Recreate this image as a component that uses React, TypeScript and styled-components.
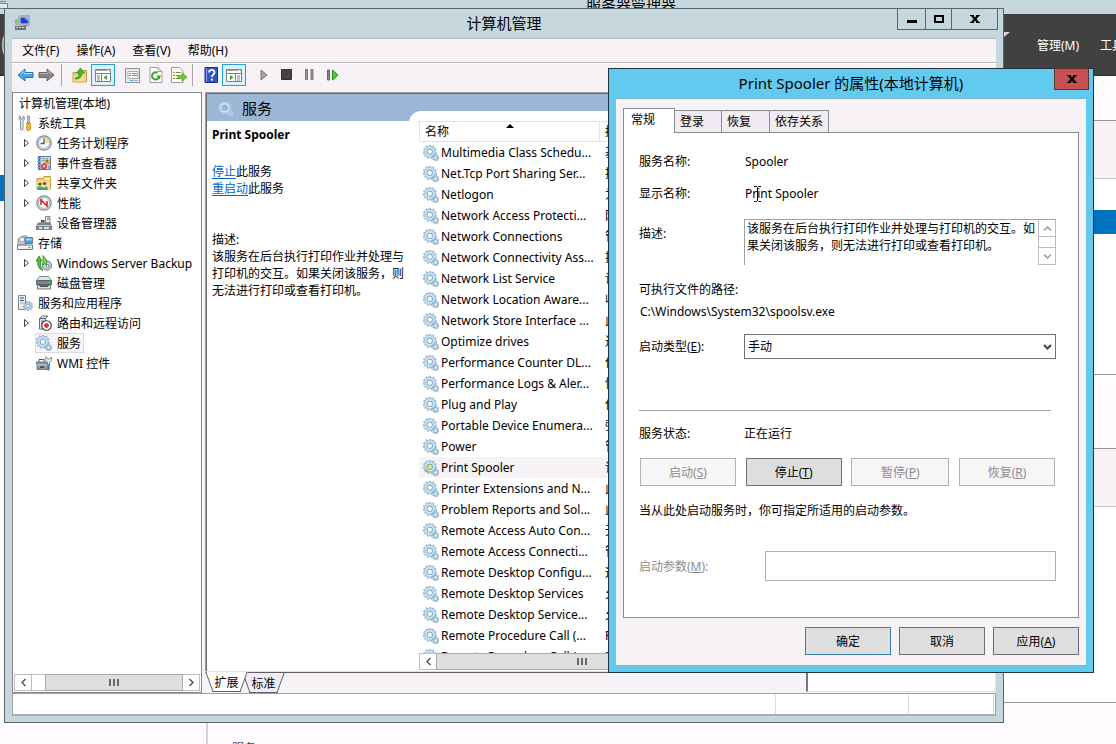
import React from "react";
import styled, { createGlobalStyle, css } from "styled-components";

const FONT = '"Noto Sans", "Noto Sans CJK SC", sans-serif';

const GlobalStyle = createGlobalStyle`
  *, *::before, *::after { box-sizing: border-box; }
  body { margin: 0; font: 12px/17px ${FONT}; color: #000; overflow: hidden; }
  button, input, select, textarea { font: inherit; color: inherit; margin: 0; border-radius: 0; }
  button { padding: 0; border: 0; background: none; }
  svg { display: block; flex: none; }
`;

const Desktop = styled.div`
  position: relative;
  display: flex;
  flex-direction: column;
  height: 100vh;
  overflow: hidden;
  background: #fffbff;
`;

/* ---------- Server manager, behind ---------- */

const BackTitle = styled.header`
  display: flex;
  justify-content: center;
  height: 14px;
  padding-left: 146px;
  background: #c5d6dc;
  font-size: 15px;
  line-height: 10px;
  flex: none;
`;

const BackTitleIcon = styled.div`
  position: absolute;
  left: 0;
  top: 0;
`;

const BackNav = styled.nav`
  display: flex;
  align-items: center;
  justify-content: flex-end;
  gap: 21px;
  height: 62px;
  padding-top: 2px;
  flex: none;
  background: #414141;
  border-bottom: 1px solid #2c2c2c;
  color: #fff;
  overflow: hidden;
  button { flex: none; white-space: nowrap; }
  button:last-child { width: 16px; overflow: hidden; }
`;

const BackCorner = styled.div`
  position: absolute;
  left: 0;
  right: 106px;
  top: 32px;
  display: flex;
  justify-content: space-between;
`;

const BackBody = styled.div`
  display: flex;
  flex: 1;
  min-height: 0;
`;

const BackSide = styled.aside`
  width: 208px;
  flex: none;
  padding-top: 99px;
  border-right: 2px solid #d4d2d6;
`;

const BackSideItem = styled.div`
  height: 26px;
  background: #0072c0;
`;

const BackTiles = styled.main`
  flex: 1;
  min-width: 0;
`;

const Tile = styled.div<{ $h: number; $bg: string; $line?: string }>`
  height: ${(p) => p.$h}px;
  background: ${(p) => p.$bg};
  border-bottom: ${(p) => (p.$line ? `1px solid ${p.$line}` : "0")};
`;

const TileCaption = styled.div`
  padding: 37px 0 0 24px;
  color: #444;
`;

/* ---------- Computer management window ---------- */

const Window = styled.section`
  position: absolute;
  inset: 8px 112px 21px 4px;
  display: flex;
  flex-direction: column;
  padding: 0 7px 6px;
  border: 1px solid #5b6468;
  background: #c5d6dc;
`;

const TitleBar = styled.header`
  position: relative;
  display: flex;
  align-items: center;
  justify-content: center;
  height: 29px;
  flex: none;
  font-size: 15px;
`;

const TitleIcon = styled.div`
  position: absolute;
  left: 2px;
  top: 6px;
`;

const WindowButtons = styled.div`
  position: absolute;
  right: -2px;
  top: -1px;
  display: flex;
  border: 1px solid #5b6468;
`;

const WindowButton = styled.button<{ $w: number }>`
  display: flex;
  align-items: center;
  justify-content: center;
  width: ${(p) => p.$w}px;
  height: 20px;
  & + & { border-left: 1px solid #5b6468; }
`;

const Client = styled.div`
  display: flex;
  flex-direction: column;
  flex: 1;
  min-height: 0;
  border-top: 1px solid #a9b8c4;
  background: #f6f2f6;
`;

const MenuBar = styled.nav`
  display: flex;
  align-items: center;
  gap: 17px;
  height: 24px;
  padding-left: 10px;
  flex: none;
  border-bottom: 1px solid #b9b9bb;
`;

const ToolBar = styled.div`
  display: flex;
  align-items: center;
  height: 29px;
  padding: 0 0 7px 4px;
  flex: none;
  border-top: 1px solid #fff;
`;

const ToolButton = styled.button<{ $on?: boolean; $w?: number }>`
  display: flex;
  align-items: center;
  justify-content: center;
  width: ${(p) => p.$w ?? 23}px;
  height: 22px;
  ${(p) =>
    p.$on &&
    css`
      width: 24px;
      border: 1px solid #26a0da;
      background: #dff2fb;
    `}
`;

const ToolSeparator = styled.div`
  width: 1px;
  height: 22px;
  margin: 0 6px 0 2px;
  background: #a5a5a8;
`;

const ToolGap = styled.div`
  width: 6px;
`;

const Panes = styled.div`
  display: flex;
  flex: 1;
  min-height: 0;
`;

const TreePane = styled.div`
  display: flex;
  flex-direction: column;
  width: 190px;
  margin-right: 3px;
  padding: 0 1px 1px;
  flex: none;
  border: 1px solid #848694;
  background: #fff;
`;

const Tree = styled.ul`
  flex: 1;
  min-height: 0;
  margin: 0;
  padding: 0;
  list-style: none;
  overflow: hidden;
`;

const TreeRow = styled.li<{ $level: number }>`
  display: flex;
  align-items: center;
  height: 20px;
  padding-left: ${(p) => [5, 3, 9][p.$level]}px;
  white-space: nowrap;
`;

const TreeTwist = styled.span`
  display: flex;
  width: 13px;
`;

const TreeItem = styled.span<{ $selected?: boolean }>`
  display: flex;
  align-items: center;
  gap: 5px;
  height: 20px;
  padding: 0 3px 0 0;
  ${(p) =>
    p.$selected &&
    css`
      background: #f8f5f8;
      box-shadow: -1px 0 0 #dedade, inset 0 1px 0 #dedade, inset 0 -1px 0 #dedade, inset -1px 0 0 #dedade;
    `}
`;

const ScrollBar = styled.div`
  display: flex;
  height: 17px;
  flex: none;
  background: #fff;
  border: 1px solid #bdbdbf;
`;

const ScrollArrow = styled.button`
  display: flex;
  align-items: center;
  justify-content: center;
  width: 16px;
  flex: none;
  background: #fff;
`;

const ScrollTrack = styled.div<{ $before: number; $after: number }>`
  display: flex;
  flex: 1;
  padding: 0 ${(p) => p.$after}px 0 ${(p) => p.$before}px;
  border: solid #bdbdbf;
  border-width: 0 1px;
`;

const ScrollThumb = styled.div`
  display: flex;
  flex: 1;
  align-items: center;
  justify-content: center;
  gap: 2px;
  margin: -1px;
  border: 1px solid #a9a9a9;
  background: #dedede;
  i { width: 2px; height: 7px; background: #6b6b6b; }
`;

const CenterPane = styled.div`
  display: flex;
  flex-direction: column;
  flex: 1;
  min-width: 0;
  margin-right: 5px;
`;

const ServicePanel = styled.div`
  display: flex;
  flex: 1;
  min-height: 0;
  padding: 1px 0 0 1px;
  border: solid #a0a0a0;
  border-width: 1px 0 0 1px;
  border-bottom: 1px solid #e3e1e3;
  box-shadow: inset 1px 1px 0 #696969;
  background: #9cb6d6;
  overflow: hidden;
`;

const Extended = styled.div`
  display: flex;
  flex-direction: column;
  width: 202px;
  flex: none;
`;

const ExtendedHead = styled.h1`
  display: flex;
  align-items: center;
  gap: 8px;
  height: 27px;
  margin: 0;
  padding: 2px 0 0 11px;
  flex: none;
  font-size: 15px;
  font-weight: 400;
`;

const ExtendedBody = styled.div`
  flex: 1;
  padding: 5px 4px 0 5px;
  background: #fff;
  p { margin: 0; }
  a { color: #0066cc; text-decoration: underline; text-underline-offset: 2px; }
`;

const ServiceName = styled.h2`
  margin: 0 0 20px;
  font-size: 12px;
  line-height: 17px;
`;

const Actions = styled.div`
  margin-bottom: 34px;
`;

const ListArea = styled.div`
  display: flex;
  flex-direction: column;
  flex: 1;
  min-width: 0;
  margin-top: 17px;
  padding: 10px 0 1px 10px;
  border-radius: 12px 0 0 0;
  background: #fff;
`;

const ListViewport = styled.div`
  flex: 1;
  min-height: 0;
  overflow: hidden;
`;

const ServiceTable = styled.table`
  width: 100%;
  table-layout: fixed;
  border-collapse: separate;
  border-spacing: 0;
  th, td { height: 21px; padding: 0 0 0 4px; text-align: left; font-weight: 400; white-space: nowrap; overflow: hidden; }
  th { position: relative; padding-left: 6px; border: solid #e2e0e2; border-width: 1px 1px 1px 0; }
  th:first-child { width: 181px; border-left-width: 1px; padding-left: 5px; }
  td + td, th + th { padding-left: 5px; }
`;

const ServiceRow = styled.tr<{ $selected?: boolean }>`
  background: ${(p) => (p.$selected ? "#f6f2f6" : "#fff")};
`;

const ServiceCell = styled.div`
  display: flex;
  align-items: center;
  gap: 2px;
`;

const SortMark = styled.span`
  position: absolute;
  left: 86px;
  top: 2px;
  border: solid transparent;
  border-width: 0 4px 4px;
  border-bottom-color: #000;
`;

const ViewTabs = styled.div`
  display: flex;
  height: 21px;
  flex: none;
  padding-left: 6px;
  gap: 6px;
  border-top: 1px solid #5f5f63;
`;

const ViewTab = styled.button<{ $on?: boolean }>`
  position: relative;
  width: 31px;
  height: 20px;
  margin-top: ${(p) => (p.$on ? -1 : 0)}px;
  z-index: ${(p) => (p.$on ? 1 : 0)};
  span { position: relative; z-index: 1; }
  &::before, &::after {
    content: "";
    position: absolute;
    top: 0;
    bottom: 0;
    background: ${(p) => (p.$on ? "#fff" : "#f0ecf1")};
    border-bottom: 1px solid #5f5f63;
  }
  &::before { left: -2px; right: 12px; border-left: 1px solid #5f5f63; transform: skewX(20deg); }
  &::after { left: 12px; right: -2px; border-right: 1px solid #5f5f63; transform: skewX(-20deg); }
`;

const ActionPane = styled.aside`
  width: 190px;
  flex: none;
  margin-bottom: 1px;
  border: solid #e3e1e3;
  border-width: 1px;
  border-left: 2px solid #77777b;
  background: #fff;
`;

const StatusBar = styled.footer`
  display: flex;
  height: 23px;
  flex: none;
  padding: 1px 1px 0 0;
  border: 1px solid #a0a0a4;
  border-bottom: 2px solid #a9adb1;
  background: #fff;
`;

const StatusCell = styled.div<{ $w?: number }>`
  ${(p) => (p.$w ? `width: ${p.$w}px; flex: none;` : "flex: 1;")}
  border-right: 1px solid #d9d7d9;
`;

/* ---------- Properties dialog ---------- */

const Dialog = styled.section`
  position: absolute;
  top: 68px;
  right: 22px;
  width: 486px;
  padding: 0 7px 6px;
  border: 1px solid #23343c;
  background: #63caef;
`;

const DialogTitle = styled.header`
  position: relative;
  display: flex;
  align-items: center;
  justify-content: center;
  height: 29px;
  font-size: 15px;
`;

const CloseButton = styled.button`
  position: absolute;
  right: -3px;
  top: -1px;
  display: flex;
  align-items: center;
  justify-content: center;
  width: 35px;
  height: 22px;
  border: 1px solid #5a3434;
  background: #c75050;
`;

const DialogBody = styled.form`
  padding: 9px 7px 10px;
  border: solid #7fb4d4;
  border-width: 1px 0;
  background: #f6f2f6;
`;

const TabList = styled.div`
  display: flex;
  align-items: flex-end;
`;

const Tab = styled.button<{ $on?: boolean; $w: number }>`
  width: ${(p) => p.$w}px;
  height: 22px;
  padding-left: 5px;
  text-align: left;
  border: 1px solid #898b95;
  border-width: 1px 1px 0 0;
  background: #f0ecf1;
  ${(p) =>
    p.$on &&
    css`
      position: relative;
      height: 25px;
      margin-bottom: -1px;
      padding: 0 0 3px 7px;
      border-left-width: 1px;
      background: #fff;
    `}
`;

const TabPage = styled.div`
  display: flex;
  flex-direction: column;
  height: 486px;
  padding: 20px 22px 0 15px;
  border: 1px solid #898b95;
  background: #fff;
`;

const Field = styled.div<{ $gap: number; $top?: boolean }>`
  display: flex;
  align-items: ${(p) => (p.$top ? "flex-start" : "center")};
  margin-bottom: ${(p) => p.$gap}px;
  ${(p) => p.$top && "label { padding-top: 6px; }"}
`;

const FieldLabel = styled.label<{ $w?: number; $muted?: boolean }>`
  width: ${(p) => p.$w ?? 105}px;
  flex: none;
  color: ${(p) => (p.$muted ? "#8d8b8d" : "#000")};
`;

const Value = styled.output`
  padding-left: 1px;
`;

const DescriptionBox = styled.div`
  display: flex;
  flex: 1;
  height: 46px;
  border: solid #a0a0a4;
  border-width: 1px 0 0 1px;
`;

const DescriptionText = styled.textarea`
  flex: 1;
  min-width: 0;
  padding: 0 0 0 2px;
  border: 0;
  outline: 0;
  resize: none;
  overflow: hidden;
  background: #fff;
`;

const VerticalScroll = styled.div`
  display: flex;
  flex-direction: column;
  justify-content: space-between;
  width: 18px;
  border: solid #bdbdbf;
  border-width: 0 1px 1px;
  button { display: flex; align-items: center; justify-content: center; height: 17px; }
  button:first-child { border-bottom: 1px solid #bdbdbf; }
  button:last-child { border-top: 1px solid #bdbdbf; }
`;

const Path = styled.div`
  margin-bottom: 14px;
  padding-left: 1px;
`;

const SelectBox = styled.div`
  position: relative;
  display: flex;
  flex: 1;
`;

const SelectArrow = styled.span`
  position: absolute;
  right: 4px;
  top: 9px;
  pointer-events: none;
`;

const Select = styled.select`
  flex: 1;
  height: 25px;
  padding: 0 3px;
  border: 1px solid #707074;
  background: #fff;
  appearance: none;
`;

const Rule = styled.hr`
  width: auto;
  height: 1px;
  margin: 51px 5px 14px 0;
  border: 0;
  background: #a0a0a4;
`;

const ButtonRow = styled.div`
  display: flex;
  justify-content: space-between;
  margin: 0 0 16px;
  padding: 0 1px;
`;

const PushButton = styled.button<{ $w: number; $primary?: boolean }>`
  width: ${(p) => p.$w}px;
  height: 28px;
  border: 1px solid ${(p) => (p.$primary ? "#3c7fb1" : "#707074")};
  background: #dedede;
  &:disabled { color: #8d8b8d; border-color: #b0b2b6; background: #f6f6f7; }
`;

const ParamInput = styled.input`
  flex: 1;
  min-width: 0;
  height: 30px;
  padding: 0 4px;
  border: 1px solid #b0b0b3;
  background: #fff;
`;

const DialogButtons = styled.div`
  display: flex;
  justify-content: flex-end;
  gap: 8px;
  padding-top: 9px;
`;

const Caret = styled.div`
  position: absolute;
  right: 354px;
  top: 186px;
`;

/* ---------- Icons ---------- */

const Svg = ({ w = 16, h = 16, children }: { w?: number; h?: number; children: React.ReactNode }) => (
  <svg width={w} height={h} viewBox={`0 0 ${w} ${h}`} fill="none" aria-hidden="true">
    {children}
  </svg>
);

/* Outline of a cog: each tooth takes four points round the circle. */
const cog = (cx: number, cy: number, outer: number, inner: number, teeth: number) => {
  const points: string[] = [];
  const step = (Math.PI * 2) / teeth;
  for (let i = 0; i < teeth; i++) {
    [
      [0.0, inner],
      [0.12, outer],
      [0.46, outer],
      [0.58, inner],
    ].forEach(([t, r]) => {
      const a = (i + t) * step;
      points.push(`${(cx + r * Math.cos(a)).toFixed(2)} ${(cy + r * Math.sin(a)).toFixed(2)}`);
    });
  }
  return `M${points.join("L")}Z`;
};

const COG_LARGE = cog(6.8, 6.8, 6.8, 5.2, 11);
const COG_SMALL = cog(12.6, 12.6, 3.4, 2.4, 8);

const Gears = ({ hot, pale }: { hot?: boolean; pale?: boolean }) => (
  <Svg>
    <path d={COG_LARGE} fill={pale ? "#b9d3ea" : "#b4d6ec"} stroke={pale ? "#a8c6e2" : "#86a9c4"} strokeWidth=".7" />
    <circle cx="6.8" cy="6.8" r="3.900" stroke={pale ? "#d6e8f6" : "#d2ebf7"} strokeWidth="1.200" />
    <circle
      cx="6.8"
      cy="6.8"
      r="2.700"
      stroke={pale ? "#86abcf" : "#6f96b5"}
      strokeWidth=".9"
      fill={hot ? "#f0e36a" : pale ? "#9cb6d6" : "#fff"}
    />
    {hot && <path d="M2 8.500a5 5 0 0 0 5 3.500" stroke="#8fbb4a" strokeWidth="1.600" />}
    <path d={COG_SMALL} fill={pale ? "#bcd3e8" : "#a9cbe2"} stroke={pale ? "#a5c0dc" : "#7d9eb9"} strokeWidth=".6" />
    <circle cx="12.6" cy="12.6" r="1" fill={pale ? "#9cb6d6" : "#fff"} />
  </Svg>
);

const ComputerIcon = () => (
  <Svg>
    <path d="M5 1h11v9H5z" fill="#d5d8da" stroke="#8b9196" />
    <path d="M6.500 2.500h8v6h-8z" fill="#1f3fd0" />
    <path d="M10 2.500h4.500v4z" fill="#8fb4ff" />
    <path d="M1 5l3-1v6H1z" fill="#9fb5a5" />
    <path d="M1 5.500h2" stroke="#37c437" />
    <path d="M1 11h11v4H1z" fill="#6f7377" />
    <path d="M2 12.500h2m1 0h2m1 0h2" stroke="#d5d8da" />
    <path d="M9 10h5v1H9z" fill="#85898d" />
  </Svg>
);

const ToolsIcon = () => (
  <Svg>
    <path
      d="M3.500 1C1.500 1.500 1.500 4.500 3.500 6v8c0 1.500 2.500 1.500 2.500 0V6c2-1.500 2-4.500 0-5v3H3.500z"
      fill="#e3e7ea"
      stroke="#7c858c"
      strokeWidth=".9"
    />
    <path d="M10.500 1h2v7h-2z" fill="#b8c0c6" stroke="#7c858c" strokeWidth=".7" />
    <path d="M9.500 8h4v1.500l-.7 1 .7 1V14l-1 1.500h-2l-1-1.500v-2.500l.7-1-.7-1z" fill="#f3b61f" stroke="#b37a0b" strokeWidth=".7" />
  </Svg>
);

const ClockIcon = () => (
  <Svg>
    <circle cx="8" cy="8" r="7.200" fill="#d5d9dc" stroke="#858c92" strokeWidth="1.200" />
    <circle cx="8" cy="8" r="5.400" fill="#f5f9fd" stroke="#aab1b6" strokeWidth=".8" />
    <path d="M8 8V3a5 5 0 0 1 5 5z" fill="#f4dc92" />
    <path d="M8 3.500V8.500H4.500" stroke="#3e6690" strokeWidth="1.300" />
  </Svg>
);

const EventIcon = () => (
  <Svg>
    <path d="M2.500 1.500h12v13h-12z" fill="#c9d9ef" stroke="#5f7ba5" />
    <path d="M2.500 1.500h2v13h-2z" fill="#4b6c9d" />
    <path d="M1 3.500h3M1 6.500h3M1 9.500h3M1 12.500h3" stroke="#8fa7c7" />
    <path d="M6 3.500h3M6 5.500h2M12 11.500h2M12 13h2" stroke="#6f91c0" />
    <path d="M11 3l3.500 6h-7z" fill="#f7c81f" stroke="#a97d06" strokeWidth=".6" />
    <path d="M11 5v2.500" stroke="#222" />
    <circle cx="8" cy="11.300" r="2.900" fill="#d8322c" />
    <path d="M6.800 10.100l2.400 2.400m0-2.400l-2.400 2.400" stroke="#fff" />
  </Svg>
);

const ShareIcon = () => (
  <Svg>
    <path d="M1 3.500h6l1-2h6.500V14H1z" fill="#f0cf6b" stroke="#b98d25" strokeWidth=".8" />
    <path d="M9 3h5v2H9z" fill="#fdf3cc" />
    <path d="M1.500 6h12.500v8H1.500z" fill="#f8e09a" />
    <circle cx="4" cy="9" r="1.600" fill="#6b4a2b" />
    <circle cx="8.500" cy="8.500" r="1.600" fill="#6b4a2b" />
    <path d="M1 15c0-5 6-5 6 0z" fill="#2f9fb5" />
    <path d="M6 15c0-5.500 6-5.500 6 0z" fill="#3fae6b" />
    <path d="M7.500 11l1 2 1-2z" fill="#fff" />
  </Svg>
);

const PerfIcon = () => (
  <Svg>
    <circle cx="8" cy="8" r="7.200" fill="#d5d9dc" stroke="#858c92" strokeWidth="1.200" />
    <circle cx="8" cy="8" r="5.400" stroke="#aab1b6" strokeWidth=".8" fill="#fff" />
    <path d="M5 10V5l6 6V6" stroke="#d11f1f" strokeWidth="1.500" />
    <path d="M4.500 5.500l2-1" stroke="#d11f1f" />
  </Svg>
);

const DeviceIcon = () => (
  <Svg>
    <path d="M9.500 1.500h4.500V8H9.500z" fill="#e9edef" stroke="#80878c" />
    <path d="M11 2.500h2v2.500h-2z" fill="#6cc66c" />
    <path d="M5 5h3.500v2.500H5z" fill="#444b51" />
    <path d="M2 7.500h12.500l1.500 3.500v4H0v-4z" fill="#78838c" />
    <path d="M1 10.500h14" stroke="#c8d0d6" />
    <path d="M3 12h3v2H3zM8 12h5v2H8z" fill="#dfe5e9" />
  </Svg>
);

const StorageIcon = () => (
  <Svg>
    <path d="M1 4l4-3h5l-1 9H1z" fill="#c3c9ce" stroke="#81898f" strokeWidth=".8" />
    <circle cx="5" cy="4.500" r="2.500" fill="#f1f3f4" stroke="#979ea4" />
    <path d="M8 2.500h7.500v6H8z" fill="#3ba2de" stroke="#777f86" />
    <path d="M9 3.500h5.500v2H9z" fill="#a6dcf8" />
    <path d="M.5 10h15v4.500H.5z" fill="#eceff0" stroke="#737a80" />
    <path d="M11.500 12.500h2" stroke="#34ba34" strokeWidth="1.500" />
  </Svg>
);

const BackupIcon = () => (
  <Svg>
    <circle cx="11" cy="10.500" r="4.500" fill="#c9cfd3" stroke="#6d767d" />
    <circle cx="11.500" cy="11" r="1.500" fill="#fff" stroke="#7b848b" />
    <path d="M0 6l3-5 3 5H4.500v5L7 15.500C2.500 14.500 1.500 10 1.500 6z" fill="#4bc436" stroke="#1f7a17" strokeWidth=".7" />
    <path d="M7 .500l3.500 4.500v5L9 8.500 7 10z" fill="#7edb5d" stroke="#1f7a17" strokeWidth=".7" />
  </Svg>
);

const DiskIcon = () => (
  <Svg>
    <path d="M3.500 1.500h9l2.500 4H1z" fill="#e4e8ea" stroke="#81888d" />
    <path d="M.5 5.500h15v4H.5z" fill="#7c858b" stroke="#596066" />
    <path d="M12 7.500h2" stroke="#4bd34b" />
    <path d="M1.500 10.500h13V14h-13z" fill="#dce0e3" stroke="#737a80" />
    <path d="M4 10.500h8v1.500H4z" fill="#4d5459" />
  </Svg>
);

const ServerAppsIcon = () => (
  <Svg>
    <path d="M1.500.5h7v14h-7z" fill="#e6eaec" stroke="#7d858b" />
    <path d="M3 3h4M3 5.500h4" stroke="#4b5359" />
    <path d="M3 8h3" stroke="#a8b0b5" />
    <path d={cog(11, 11, 4.8, 3.6, 9)} fill="#b4d6ec" stroke="#7d9eb9" strokeWidth=".7" />
    <circle cx="11" cy="11" r="1.700" fill="#fff" stroke="#7d9eb9" strokeWidth=".7" />
  </Svg>
);

const RouteIcon = () => (
  <Svg>
    <path d="M3.500 3.500l3-2.500h5.500l-2.500 2.500zM3.500 3.500h6V14h-6z" fill="#e3e6e8" stroke="#555c61" strokeWidth=".9" />
    <path d="M5 6h3M5 8h2" stroke="#666d72" />
    <circle cx="10.500" cy="10.500" r="4.800" fill="#fff" stroke="#333" strokeWidth="1.100" />
    <path d="M10.500 8v5M8 10.500h5" stroke="#e02121" strokeWidth="2.200" />
  </Svg>
);

const WmiIcon = () => (
  <Svg>
    <path d="M3 7V4.500h5V7" stroke="#515a61" />
    <path d="M0 7h12l1 2.500V14.500H1V10z" fill="#8b969e" stroke="#566068" strokeWidth=".7" />
    <path d="M1 10h11" stroke="#d0d8dd" />
    <path d="M4 11h4v2H4z" fill="#4d565d" />
    <path d="M10 1.500l1.500 2.500 2.500 0L15.500 2C16.500 5 15.500 6 13.500 7v3h-2V7C9 6 9 3.500 10 1.500z" fill="#eef0f2" stroke="#6a7278" strokeWidth=".8" />
    <path d="M11.500 9h2v6.500h-2z" fill="#3f82c4" />
  </Svg>
);

const TwistIcon = () => (
  <Svg w={7} h={10}>
    <path d="M1.500 1.500v7l4-3.500z" stroke="#444" fill="#fff" />
  </Svg>
);

const ArrowIcon = ({ back }: { back?: boolean }) => (
  <Svg w={17} h={14}>
    {back ? (
      <>
        <path d="M1 7l7-6v3.500h8v5H8V13z" fill="#43a8ea" stroke="#2274b8" />
        <path d="M3 6.500L7 3v2.500h8" stroke="#a6dbf8" />
      </>
    ) : (
      <>
        <path d="M16 7L9 1v3.500H1v5h8V13z" fill="#858585" stroke="#666" />
        <path d="M2 5.500h8V3l4 3.500" stroke="#b5b5b5" />
      </>
    )}
  </Svg>
);

const FolderUpIcon = () => (
  <Svg>
    <path d="M1 5.500h5l1-2h7.500V15H1z" fill="#edc966" stroke="#b98f35" strokeWidth=".8" />
    <path d="M1.500 8H14v6.500H1.500z" fill="#f6dc8d" />
    <path d="M3 11c3 0 4-2 4-5H4.500L8.500 1l4 5H10c0 4-2 6-7 6z" fill="#47b82e" stroke="#26831a" strokeWidth=".6" />
  </Svg>
);

const PaneIcon = ({ right }: { right?: boolean }) => (
  <Svg>
    <path d="M.5 2.500h15v12H.5z" fill="#fff" stroke="#7c8187" />
    <path d="M1 3.500h14" stroke="#9da5ae" />
    <path d="M12 3.500h2" stroke="#fff" />
    <path d="M1 6.500h14" stroke="#7c8187" />
    {right ? (
      <>
        <path d="M9.500 7v7M11 9h3M11 11h3M11 13h3" stroke="#7c8187" />
        <path d="M4 8l3.500 2.500L4 13z" fill="#35a822" />
      </>
    ) : (
      <>
        <path d="M6.500 7v7M2 9h3M2 11h3M2 13h3" stroke="#7c8187" />
        <path d="M12 8l-3.500 2.500L12 13z" fill="#35a822" />
      </>
    )}
  </Svg>
);

const PropsIcon = () => (
  <Svg>
    <path d="M.5 1.500h14v14H.5z" fill="#e9ebed" stroke="#8b8f94" />
    <path d="M3 4.500h10v7H3z" fill="#fff" stroke="#a9adb1" />
    <path d="M4 6.500h2m1 0h5M4 8.500h2m1 0h5" stroke="#7e858c" />
    <path d="M5 13.500h3" stroke="#4aa7dc" />
    <path d="M9 13.500h4" stroke="#a9adb1" />
  </Svg>
);

const RefreshIcon = () => (
  <Svg>
    <path d="M2 .500h8l4 4v11H2z" fill="#fff" stroke="#9a9ea3" />
    <path d="M10 .5v4h4" stroke="#9a9ea3" />
    <path d="M11.200 9.500A3.600 3.600 0 1 1 9.500 5.800" stroke="#35a822" strokeWidth="2" />
    <path d="M8 8.500h5l-1.500 4z" fill="#35a822" />
  </Svg>
);

const ExportIcon = () => (
  <Svg>
    <path d="M.500.500h8l3.500 3.500v11.500H.500z" fill="#fffdf0" stroke="#9a9ea3" />
    <path d="M2 5.500h2m1 0h5M2 8.500h2m1 0h3M2 11.500h2m1 0h4" stroke="#8a8452" />
    <path d="M7 8.500h4V6l5 4-5 4v-2.500H7z" fill="#6ccc3c" stroke="#3c9a1e" strokeWidth=".7" />
  </Svg>
);

const HelpIcon = () => (
  <Svg>
    <path d="M2 .500h12.500v15H2z" fill="#2f55c8" stroke="#1b2f7e" />
    <path d="M3.500 1v14" stroke="#7f9cf0" />
    <path d="M6 5.500c0-3.500 5.500-3.500 5.500 0 0 2-2.700 2.200-2.700 4.500" stroke="#fff" strokeWidth="1.800" />
    <path d="M8 11.500h1.800v2H8z" fill="#fff" />
  </Svg>
);

const PlayIcon = () => (
  <Svg w={8} h={12}>
    <path d="M1 1v10l6-5z" fill="#a7a7a7" stroke="#777" />
  </Svg>
);

const StopIcon = () => (
  <Svg w={11} h={11}>
    <path d="M.5.5h10v10H.5z" fill="#444" stroke="#303030" />
  </Svg>
);

const PauseIcon = () => (
  <Svg w={9} h={11}>
    <path d="M.5.5h2v10h-2zM6 .500h2v10H6z" fill="#999" stroke="#777" />
  </Svg>
);

const RestartIcon = () => (
  <Svg w={12} h={12}>
    <path d="M.5 1h2v10h-2z" fill="#888" stroke="#666" />
    <path d="M5.500 1v10l5.500-5z" fill="#4ed02d" stroke="#239214" />
  </Svg>
);

const CrossIcon = () => (
  <Svg w={10} h={8}>
    <path d="M1.500 0L8.500 8M8.500 0L1.500 8" stroke="#000" strokeWidth="2.200" />
    <path d="M0 .5h4M6 .5h4M0 7.500h4M6 7.500h4" stroke="#000" />
  </Svg>
);

const Chevron = ({ dir }: { dir: "left" | "right" | "up" | "down" }) => {
  const d = {
    left: "M6.500 1L3 4.500L6.500 8",
    right: "M2.500 1L6 4.500L2.500 8",
    up: "M1 6.500L4.500 3L8 6.500",
    down: "M1 2.500L4.500 6L8 2.500",
  }[dir];
  return (
    <Svg w={9} h={9}>
      <path d={d} stroke={dir === "up" || dir === "down" ? "#9a9a9a" : "#555"} strokeWidth="1.500" />
    </Svg>
  );
};

/* ---------- Data ---------- */

type Node = { level: number; label: string; icon?: React.ReactNode; twist?: boolean; selected?: boolean };

const TREE: Node[] = [
  { level: 0, label: "计算机管理(本地)" },
  { level: 1, label: "系统工具", icon: <ToolsIcon /> },
  { level: 2, label: "任务计划程序", icon: <ClockIcon />, twist: true },
  { level: 2, label: "事件查看器", icon: <EventIcon />, twist: true },
  { level: 2, label: "共享文件夹", icon: <ShareIcon />, twist: true },
  { level: 2, label: "性能", icon: <PerfIcon />, twist: true },
  { level: 2, label: "设备管理器", icon: <DeviceIcon /> },
  { level: 1, label: "存储", icon: <StorageIcon /> },
  { level: 2, label: "Windows Server Backup", icon: <BackupIcon />, twist: true },
  { level: 2, label: "磁盘管理", icon: <DiskIcon /> },
  { level: 1, label: "服务和应用程序", icon: <ServerAppsIcon /> },
  { level: 2, label: "路由和远程访问", icon: <RouteIcon />, twist: true },
  { level: 2, label: "服务", icon: <Gears />, selected: true },
  { level: 2, label: "WMI 控件", icon: <WmiIcon /> },
];

const SERVICES: [string, string][] = [
  ["Multimedia Class Schedu...", "基于"],
  ["Net.Tcp Port Sharing Ser...", "提供"],
  ["Netlogon", "为用户"],
  ["Network Access Protecti...", "网络"],
  ["Network Connections", "管理"],
  ["Network Connectivity Ass...", "提供"],
  ["Network List Service", "识别"],
  ["Network Location Aware...", "收集"],
  ["Network Store Interface ...", "此服务"],
  ["Optimize drives", "通过"],
  ["Performance Counter DL...", "使远程"],
  ["Performance Logs & Aler...", "性能"],
  ["Plug and Play", "使计算机"],
  ["Portable Device Enumera...", "强制"],
  ["Power", "管理"],
  ["Print Spooler", "该服务"],
  ["Printer Extensions and N...", "此服务"],
  ["Problem Reports and Sol...", "此服务"],
  ["Remote Access Auto Con...", "无论"],
  ["Remote Access Connecti...", "管理"],
  ["Remote Desktop Configu...", "远程"],
  ["Remote Desktop Services", "允许"],
  ["Remote Desktop Service...", "允许"],
  ["Remote Procedure Call (...", "RPCSS"],
  ["Remote Procedure Call (...", "在"],
];

const DESCRIPTION = "该服务在后台执行打印作业并处理与打印机的交互。如果关闭该服务，则无法进行打印或查看打印机。";

const HorizontalScroll = ({ before, after }: { before: number; after: number }) => (
  <ScrollBar>
    <ScrollArrow aria-label="向左滚动">
      <Chevron dir="left" />
    </ScrollArrow>
    <ScrollTrack $before={before} $after={after}>
      <ScrollThumb>
        <i />
        <i />
        <i />
      </ScrollThumb>
    </ScrollTrack>
    <ScrollArrow aria-label="向右滚动">
      <Chevron dir="right" />
    </ScrollArrow>
  </ScrollBar>
);

const ServerManager = () => (
  <>
    <BackTitle>
      服务器管理器
      <BackTitleIcon>
        <Svg w={9} h={9}>
          <path d="M0 3.500h7.500v5H0M0 1.500h6" stroke="#5d8ba6" fill="#dcebf2" />
        </Svg>
      </BackTitleIcon>
    </BackTitle>
    <BackNav>
      <button>管理(M)</button>
      <button>工具(T)</button>
    </BackNav>
    <BackCorner>
      <Svg w={4} h={26}>
        <path d="M5 3c-3 5-3 15 0 20" stroke="#b5b5b5" strokeWidth="2" />
      </Svg>
      <Svg w={7} h={6}>
        <path d="M0 0h7L1 5H0z" fill="#d5d5d5" />
      </Svg>
    </BackCorner>
    <BackBody>
      <BackSide>
        <BackSideItem />
      </BackSide>
      <BackTiles>
        <Tile $h={45} $bg="#fffbff" $line="#97979b" />
        <Tile $h={58} $bg="#f6f2f6" $line="#c9c7cb" />
        <Tile $h={31} $bg="#ffffff" />
        <Tile $h={24} $bg="#0072c0" />
        <Tile $h={141} $bg="#ffffff" $line="#97979b" />
        <Tile $h={74} $bg="#fffbff" $line="#97979b" />
        <Tile $h={58} $bg="#f6f2f6" $line="#c9c7cb" />
        <Tile $h={196} $bg="#ffffff" $line="#97979b" />
        <TileCaption>服务</TileCaption>
      </BackTiles>
    </BackBody>
  </>
);

const ManagementWindow = () => (
  <Window>
    <TitleBar>
      <TitleIcon>
        <ComputerIcon />
      </TitleIcon>
      计算机管理
      <WindowButtons>
        <WindowButton $w={27} aria-label="最小化">
          <Svg w={10} h={10}>
            <path d="M0 6h10v3H0z" fill="#000" />
          </Svg>
        </WindowButton>
        <WindowButton $w={26} aria-label="最大化">
          <Svg w={10} h={10}>
            <path d="M1 2h8v6H1z" stroke="#000" strokeWidth="2" />
          </Svg>
        </WindowButton>
        <WindowButton $w={46} aria-label="关闭">
          <CrossIcon />
        </WindowButton>
      </WindowButtons>
    </TitleBar>
    <Client>
      <MenuBar>
        <button>文件(F)</button>
        <button>操作(A)</button>
        <button>查看(V)</button>
        <button>帮助(H)</button>
      </MenuBar>
      <ToolBar>
        <ToolButton $w={18} aria-label="后退">
          <ArrowIcon back />
        </ToolButton>
        <ToolButton $w={25} aria-label="前进">
          <ArrowIcon />
        </ToolButton>
        <ToolSeparator />
        <ToolButton aria-label="上一级">
          <FolderUpIcon />
        </ToolButton>
        <ToolButton $on aria-label="显示控制台树">
          <PaneIcon />
        </ToolButton>
        <ToolGap />
        <ToolButton aria-label="属性">
          <PropsIcon />
        </ToolButton>
        <ToolButton aria-label="刷新">
          <RefreshIcon />
        </ToolButton>
        <ToolButton aria-label="导出列表">
          <ExportIcon />
        </ToolButton>
        <ToolSeparator />
        <ToolButton aria-label="帮助">
          <HelpIcon />
        </ToolButton>
        <ToolButton $on aria-label="显示操作窗格">
          <PaneIcon right />
        </ToolButton>
        <ToolGap />
        <ToolButton aria-label="启动服务">
          <PlayIcon />
        </ToolButton>
        <ToolButton aria-label="停止服务">
          <StopIcon />
        </ToolButton>
        <ToolButton aria-label="暂停服务">
          <PauseIcon />
        </ToolButton>
        <ToolButton aria-label="重启动服务">
          <RestartIcon />
        </ToolButton>
      </ToolBar>
      <Panes>
        <TreePane>
          <Tree>
            {TREE.map((n) => (
              <TreeRow key={n.label} $level={n.level}>
                {n.level === 2 && <TreeTwist>{n.twist && <TwistIcon />}</TreeTwist>}
                <TreeItem $selected={n.selected}>
                  {n.icon}
                  {n.label}
                </TreeItem>
              </TreeRow>
            ))}
          </Tree>
          <HorizontalScroll before={14} after={0} />
        </TreePane>
        <CenterPane>
          <ServicePanel>
            <Extended>
              <ExtendedHead>
                <Gears pale />
                服务
              </ExtendedHead>
              <ExtendedBody>
                <ServiceName>Print Spooler</ServiceName>
                <Actions>
                  <p>
                    <a href="#stop">停止</a>此服务
                  </p>
                  <p>
                    <a href="#restart">重启动</a>此服务
                  </p>
                </Actions>
                <p>描述:</p>
                <p>{DESCRIPTION}</p>
              </ExtendedBody>
            </Extended>
            <ListArea>
              <ListViewport>
                <ServiceTable>
                  <thead>
                    <tr>
                      <th>
                        名称
                        <SortMark />
                      </th>
                      <th>描述</th>
                    </tr>
                  </thead>
                  <tbody>
                    {SERVICES.map(([name, text], i) => (
                      <ServiceRow key={i} $selected={name === "Print Spooler"}>
                        <td>
                          <ServiceCell>
                            <Gears hot={name === "Print Spooler"} />
                            {name}
                          </ServiceCell>
                        </td>
                        <td>{text}</td>
                      </ServiceRow>
                    ))}
                  </tbody>
                </ServiceTable>
              </ListViewport>
              <HorizontalScroll before={0} after={56} />
            </ListArea>
          </ServicePanel>
          <ViewTabs>
            <ViewTab $on>
              <span>扩展</span>
            </ViewTab>
            <ViewTab>
              <span>标准</span>
            </ViewTab>
          </ViewTabs>
        </CenterPane>
        <ActionPane />
      </Panes>
      <StatusBar>
        <StatusCell />
        <StatusCell $w={133} />
        <StatusCell $w={85} />
      </StatusBar>
    </Client>
  </Window>
);

const PropertiesDialog = () => (
  <Dialog role="dialog" aria-labelledby="dialog-title">
    <DialogTitle>
      <span id="dialog-title">Print Spooler 的属性(本地计算机)</span>
      <CloseButton aria-label="关闭">
        <CrossIcon />
      </CloseButton>
    </DialogTitle>
    <DialogBody onSubmit={(e) => e.preventDefault()}>
      <TabList role="tablist">
        <Tab type="button" role="tab" $on $w={52}>
          常规
        </Tab>
        <Tab type="button" role="tab" $w={47}>
          登录
        </Tab>
        <Tab type="button" role="tab" $w={48}>
          恢复
        </Tab>
        <Tab type="button" role="tab" $w={59}>
          依存关系
        </Tab>
      </TabList>
      <TabPage>
        <Field $gap={15}>
          <FieldLabel htmlFor="svc-name">服务名称:</FieldLabel>
          <Value id="svc-name">Spooler</Value>
        </Field>
        <Field $gap={17}>
          <FieldLabel htmlFor="svc-display">显示名称:</FieldLabel>
          <Value id="svc-display">Print Spooler</Value>
        </Field>
        <Field $gap={16} $top>
          <FieldLabel htmlFor="svc-desc">描述:</FieldLabel>
          <DescriptionBox>
            <DescriptionText id="svc-desc" readOnly value={DESCRIPTION} />
            <VerticalScroll>
              <button type="button" aria-label="向上滚动">
                <Chevron dir="up" />
              </button>
              <button type="button" aria-label="向下滚动">
                <Chevron dir="down" />
              </button>
            </VerticalScroll>
          </DescriptionBox>
        </Field>
        <Field $gap={5}>可执行文件的路径:</Field>
        <Path>C:\Windows\System32\spoolsv.exe</Path>
        <Field $gap={0}>
          <FieldLabel htmlFor="svc-type">
            启动类型(<u>E</u>):
          </FieldLabel>
          <SelectBox>
            <Select id="svc-type" defaultValue="手动">
              <option>自动</option>
              <option>手动</option>
              <option>禁用</option>
            </Select>
            <SelectArrow>
              <Svg w={9} h={8}>
                <path d="M1 2L4.500 5.500L8 2" stroke="#444" strokeWidth="2" />
              </Svg>
            </SelectArrow>
          </SelectBox>
        </Field>
        <Rule />
        <Field $gap={16}>
          <FieldLabel htmlFor="svc-state">服务状态:</FieldLabel>
          <output id="svc-state">正在运行</output>
        </Field>
        <ButtonRow>
          <PushButton type="button" $w={96} disabled>
            启动(<u>S</u>)
          </PushButton>
          <PushButton type="button" $w={96}>
            停止(<u>T</u>)
          </PushButton>
          <PushButton type="button" $w={98} disabled>
            暂停(<u>P</u>)
          </PushButton>
          <PushButton type="button" $w={96} disabled>
            恢复(<u>R</u>)
          </PushButton>
        </ButtonRow>
        <Field $gap={32}>当从此处启动服务时，你可指定所适用的启动参数。</Field>
        <Field $gap={0}>
          <FieldLabel htmlFor="svc-args" $w={126} $muted>
            启动参数(<u>M</u>):
          </FieldLabel>
          <ParamInput id="svc-args" disabled />
        </Field>
      </TabPage>
      <DialogButtons>
        <PushButton $w={86} $primary>
          确定
        </PushButton>
        <PushButton type="button" $w={86}>
          取消
        </PushButton>
        <PushButton type="button" $w={86}>
          应用(<u>A</u>)
        </PushButton>
      </DialogButtons>
    </DialogBody>
  </Dialog>
);

const App = () => (
  <Desktop lang="zh-CN">
    <GlobalStyle />
    <ServerManager />
    <ManagementWindow />
    <PropertiesDialog />
    <Caret>
      <Svg w={9} h={16}>
        <path d="M1 .5h2.500l1 1 1-1H8M4.500 1.500v13M1 15.500h2.500l1-1 1 1H8" stroke="#000" />
      </Svg>
    </Caret>
  </Desktop>
);

export default App;
